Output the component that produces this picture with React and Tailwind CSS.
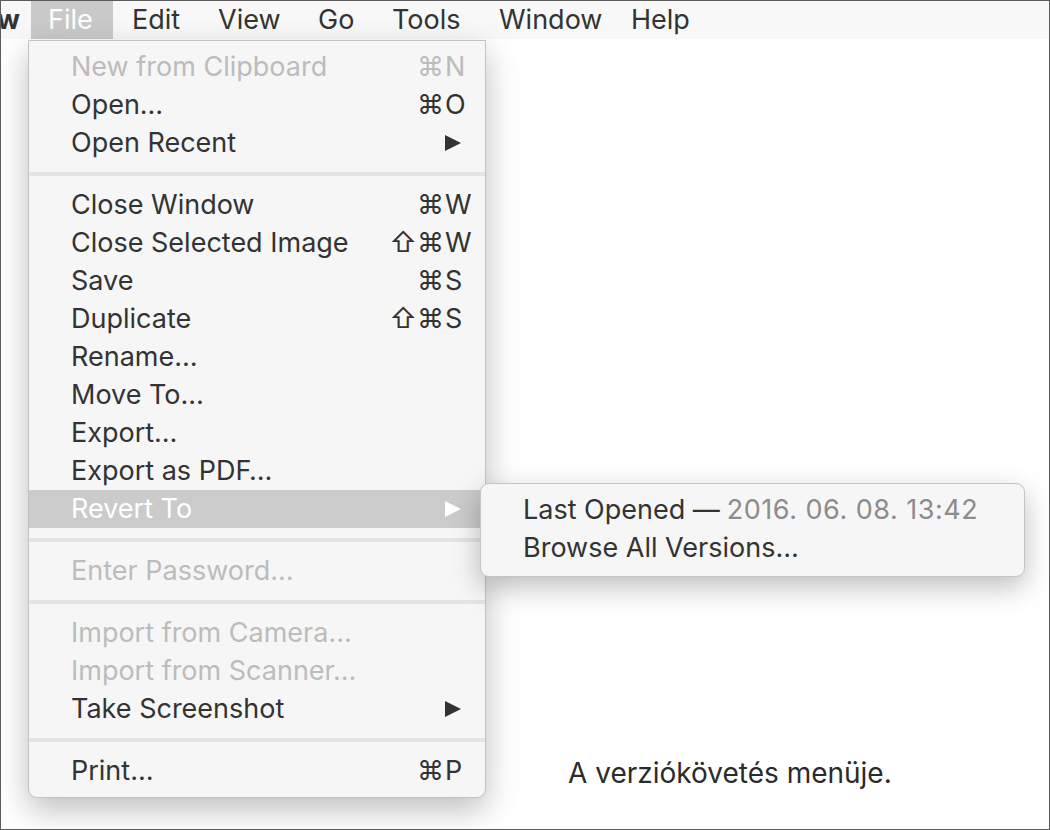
import React from 'react';

const items = [
  { label: 'New from Clipboard', mods: '⌘', key: 'N', disabled: true },
  { label: 'Open…', mods: '⌘', key: 'O' },
  { label: 'Open Recent', arrow: true },
  { sep: true },
  { label: 'Close Window', mods: '⌘', key: 'W' },
  { label: 'Close Selected Image', mods: '⇧⌘', key: 'W' },
  { label: 'Save', mods: '⌘', key: 'S' },
  { label: 'Duplicate', mods: '⇧⌘', key: 'S' },
  { label: 'Rename…' },
  { label: 'Move To…' },
  { label: 'Export…' },
  { label: 'Export as PDF…' },
  { label: 'Revert To', arrow: true, active: true },
  { sep: true },
  { label: 'Enter Password…', disabled: true },
  { sep: true },
  { label: 'Import from Camera…', disabled: true },
  { label: 'Import from Scanner…', disabled: true },
  { label: 'Take Screenshot', arrow: true },
  { sep: true },
  { label: 'Print…', mods: '⌘', key: 'P' },
];

// menu bar titles, sized so the text lands where the screenshot has it
const menus = [
  { name: 'File', cls: 'w-[82px] pl-[17px] bg-[#c9c9c9] text-white' },
  { name: 'Edit', cls: 'w-[86px] pl-[19px]' },
  { name: 'View', cls: 'w-[100px] pl-[19px]' },
  { name: 'Go', cls: 'w-[74px] pl-[19px]' },
  { name: 'Tools', cls: 'w-[107px] pl-[19px]' },
  { name: 'Window', cls: 'w-[132px] pl-[19px]' },
  { name: 'Help', cls: 'pl-[19px]' },
];

function Arrow({ color }) {
  return (
    <svg width="18" height="18" viewBox="0 0 18 18">
      <polygon points="1,1 17,9 1,17" fill={color} />
    </svg>
  );
}

function Row({ item }) {
  if (item.sep) {
    return (
      <div className="h-[24px] flex items-center">
        <div className="h-[4px] w-full bg-[#e4e4e4]" />
      </div>
    );
  }
  const color = item.active ? 'text-white' : item.disabled ? 'text-[#bcbcbc]' : 'text-[#333333]';
  return (
    <div className={`h-[38px] flex items-center ${item.active ? 'bg-[#cbcbcb]' : ''} ${color}`}>
      <span className="pl-[42px] flex-1 whitespace-nowrap">{item.label}</span>
      {item.mods && (
        <div className="flex">
          <span className="w-[58px] text-right pr-[1px]">{item.mods}</span>
          <span className="w-[40px]">{item.key}</span>
        </div>
      )}
      {item.arrow && (
        <div className="w-[41px] flex">
          <Arrow color={item.active ? '#ffffff' : '#333333'} />
        </div>
      )}
    </div>
  );
}

export default function App() {
  return (
    <div className="w-[1050px] h-[830px] relative overflow-hidden bg-white border border-[#5c5c5c] font-['Inter',sans-serif] text-[27px] text-[#333333]">
      <div className="h-[38px] bg-[#f8f8f8] flex items-stretch">
        <span className="font-bold ml-[-4px] w-[34px] flex items-center">w</span>
        {menus.map((m) => (
          <span key={m.name} className={`flex items-center ${m.cls}`}>
            {m.name}
          </span>
        ))}
      </div>

      <div className="pl-[567px] pt-[713px] text-[28px] text-[#2b2b2b]">A verziókövetés menüje.</div>

      <div className="absolute left-[27px] top-[39px] w-[458px] bg-[#f6f6f6] border border-[#c2c2c2] rounded-b-[9px] pt-[7px] pb-[7px] shadow-[0_12px_32px_rgba(0,0,0,0.26)]">
        {items.map((it, i) => (
          <Row key={i} item={it} />
        ))}
      </div>

      <div className="absolute left-[479px] top-[482px] w-[545px] h-[94px] bg-[#f6f6f6] border border-[#c4c4c4] rounded-[9px] pt-[7px] shadow-[0_10px_28px_rgba(0,0,0,0.26)] text-[#333333]">
        <div className="h-[38px] flex items-center pl-[42px] whitespace-nowrap">
          Last Opened — <span className="text-[#8c8c8c] ml-[7px] tracking-[0.5px]">2016. 06. 08. 13:42</span>
        </div>
        <div className="h-[38px] flex items-center pl-[42px]">Browse All Versions…</div>
      </div>
    </div>
  );
}
